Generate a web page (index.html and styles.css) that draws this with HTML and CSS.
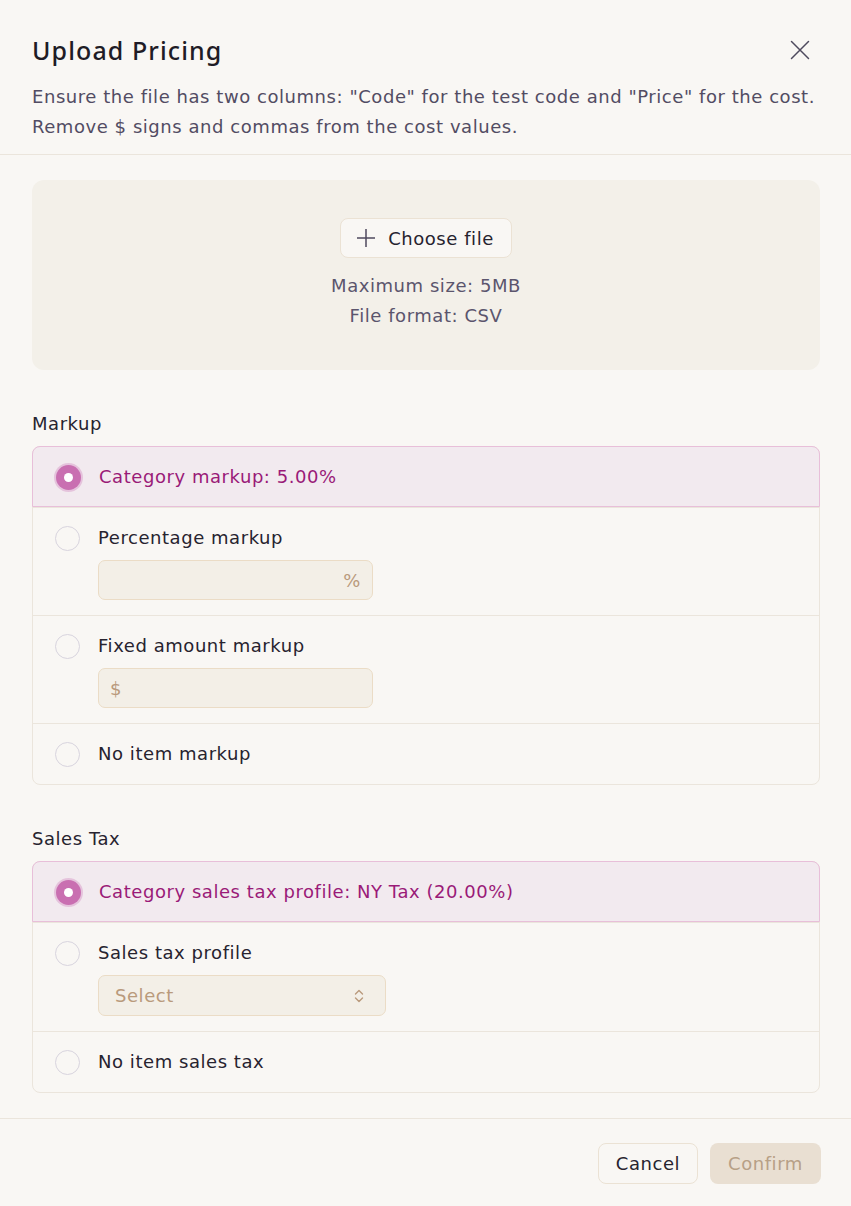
FILE: index.html
```html
<!DOCTYPE html>
<html>
<head>
<meta charset="utf-8">
<link rel="stylesheet" href="styles.css">
</head>
<body>
<div class="modal">
  <header class="head">
    <div class="title-row">
      <h1 class="title">Upload Pricing</h1>
      <button class="close" aria-label="Close">
        <svg width="20" height="20" viewBox="0 0 20 20"><path d="M1.5 1.5 L18.5 18.5 M18.5 1.5 L1.5 18.5" stroke="#4f4a5e" stroke-width="1.5" stroke-linecap="round" fill="none"/></svg>
      </button>
    </div>
    <p class="desc"><span class="line">Ensure the file has two columns: "Code" for the test code and "Price" for the cost.</span> <span class="line">Remove $ signs and commas from the cost values.</span></p>
  </header>
  <main class="body">
    <div class="drop">
      <button class="choose">
        <svg width="20" height="20" viewBox="0 0 20 20"><path d="M10 1 V19 M1 10 H19" stroke="#4f4a5e" stroke-width="1.5" fill="none"/></svg>
        <span>Choose file</span>
      </button>
      <div class="hint">Maximum size: 5MB</div>
      <div class="hint">File format: CSV</div>
    </div>

    <section class="group">
      <div class="label">Markup</div>
      <div class="options">
        <div class="opt selected">
          <span class="radio on"></span>
          <div class="opt-main"><div class="opt-text">Category markup: 5.00%</div></div>
        </div>
        <div class="opt has-field">
          <span class="radio"></span>
          <div class="opt-main">
            <div class="opt-text">Percentage markup</div>
            <div class="field"><span class="grow"></span><span class="affix">%</span></div>
          </div>
        </div>
        <div class="opt has-field">
          <span class="radio"></span>
          <div class="opt-main">
            <div class="opt-text">Fixed amount markup</div>
            <div class="field"><span class="affix">$</span><span class="grow"></span></div>
          </div>
        </div>
        <div class="opt">
          <span class="radio"></span>
          <div class="opt-main"><div class="opt-text">No item markup</div></div>
        </div>
      </div>
    </section>

    <section class="group">
      <div class="label">Sales Tax</div>
      <div class="options">
        <div class="opt selected">
          <span class="radio on"></span>
          <div class="opt-main"><div class="opt-text">Category sales tax profile: NY Tax (20.00%)</div></div>
        </div>
        <div class="opt has-field">
          <span class="radio"></span>
          <div class="opt-main">
            <div class="opt-text">Sales tax profile</div>
            <div class="field select"><span class="placeholder">Select</span>
              <svg width="12" height="16" viewBox="0 0 12 16"><path d="M2.5 6 L6 2.5 L9.5 6 M2.5 10 L6 13.5 L9.5 10" stroke="#b99a7c" stroke-width="1.4" fill="none" stroke-linecap="round" stroke-linejoin="round"/></svg>
            </div>
          </div>
        </div>
        <div class="opt">
          <span class="radio"></span>
          <div class="opt-main"><div class="opt-text">No item sales tax</div></div>
        </div>
      </div>
    </section>
  </main>
  <footer class="foot">
    <button class="btn cancel">Cancel</button>
    <button class="btn confirm">Confirm</button>
  </footer>
</div>
</body>
</html>
```

FILE: styles.css
```css
* { box-sizing: border-box; }
html, body { margin: 0; padding: 0; }
body {
  background: #f9f7f4;
  font-family: "DejaVu Sans", "Noto Sans", sans-serif;
  color: #27232f;
  letter-spacing: 0.55px;
}
.modal { width: 851px; min-height: 1206px; display: flex; flex-direction: column; }
.head { padding: 30px 20px 12px 32px; border-bottom: 1px solid #ebe5dc; }
.title-row { display: flex; justify-content: space-between; align-items: center; height: 40px; }
.title { margin: 0; font-family: "Noto Sans", sans-serif; font-size: 25px; font-weight: 500; color: #1f1c26; letter-spacing: 1.1px; }
.close { background: none; border: 0; padding: 0; margin-right: 21px; width: 20px; height: 20px; display: flex; }
.desc { margin: 12px 0 0; font-size: 18px; line-height: 30px; color: #524c63; }
.line { display: block; white-space: nowrap; }
.body { padding: 25px 31px 0 32px; flex: 1; }
.drop {
  background: #f3f0e9; border-radius: 12px; height: 190px;
  display: flex; flex-direction: column; align-items: center; padding-top: 38px;
}
.choose {
  display: flex; align-items: center; gap: 12px; height: 40px; padding: 0 17px 0 15px;
  background: #f9f7f4; border: 1px solid #ebe2d4; border-radius: 8px;
  font-family: inherit; font-size: 18px; letter-spacing: inherit; color: #27232f;
  margin-bottom: 13px;
}
.hint { font-size: 18px; line-height: 30px; color: #5b556d; }
.group { margin-top: 39px; }
.label { font-size: 18px; line-height: 30px; margin-bottom: 7px; }
.options { border: 1px solid #ebe5dc; border-radius: 8px; }
.opt { display: flex; gap: 18px; padding: 16px 22px 16px; border-top: 1px solid #ebe5dc; }
.opt.has-field { padding-bottom: 15px; }
.opt:first-child { border-top: 0; border-radius: 8px 8px 0 0; }
.opt.selected {
  background: #f2eaef; border: 1px solid #e8bfd9; margin: -1px -1px 0; padding: 16px 23px 15px 23px;
  color: #9a1a78;
}
.radio {
  width: 25px; height: 25px; border-radius: 50%; border: 1px solid #d8d4de; background: #f9f7f4;
  flex: none; margin-top: 2px;
}
.radio.on {
  background: #c96fb1; border: 0; box-shadow: 0 0 0 2px #e5c3dc; position: relative;
}
.radio.on::after {
  content: ""; position: absolute; left: 8px; top: 8px; width: 9px; height: 9px; border-radius: 50%; background: #fff;
}
.opt-main { display: flex; flex-direction: column; gap: 8px; }
.opt-text { font-size: 18px; line-height: 28px; }
.field {
  width: 275px; height: 40px; background: #f3efe7; border: 1px solid #ebdcc6; border-radius: 7px;
  display: flex; align-items: center; padding: 0 11px 0 11px; color: #b99a7c; font-size: 18px;
}
.grow { flex: 1; }
.field.select { width: 288px; height: 41px; justify-content: space-between; padding: 0 20px 0 16px; }
.foot {
  border-top: 1px solid #ebe5dc; margin-top: 25px; height: 89px;
  display: flex; justify-content: flex-end; align-items: flex-start; gap: 12px; padding: 24px 30px 0 0;
}
.btn {
  height: 41px; border-radius: 8px; font-family: inherit; font-size: 18px; letter-spacing: inherit;
  padding: 0;
}
.cancel { background: #f9f7f4; border: 1px solid #ebe2d4; color: #27232f; width: 100px; }
.confirm { background: #e9dfd2; border: 0; color: #b7a086; width: 111px; }
```
